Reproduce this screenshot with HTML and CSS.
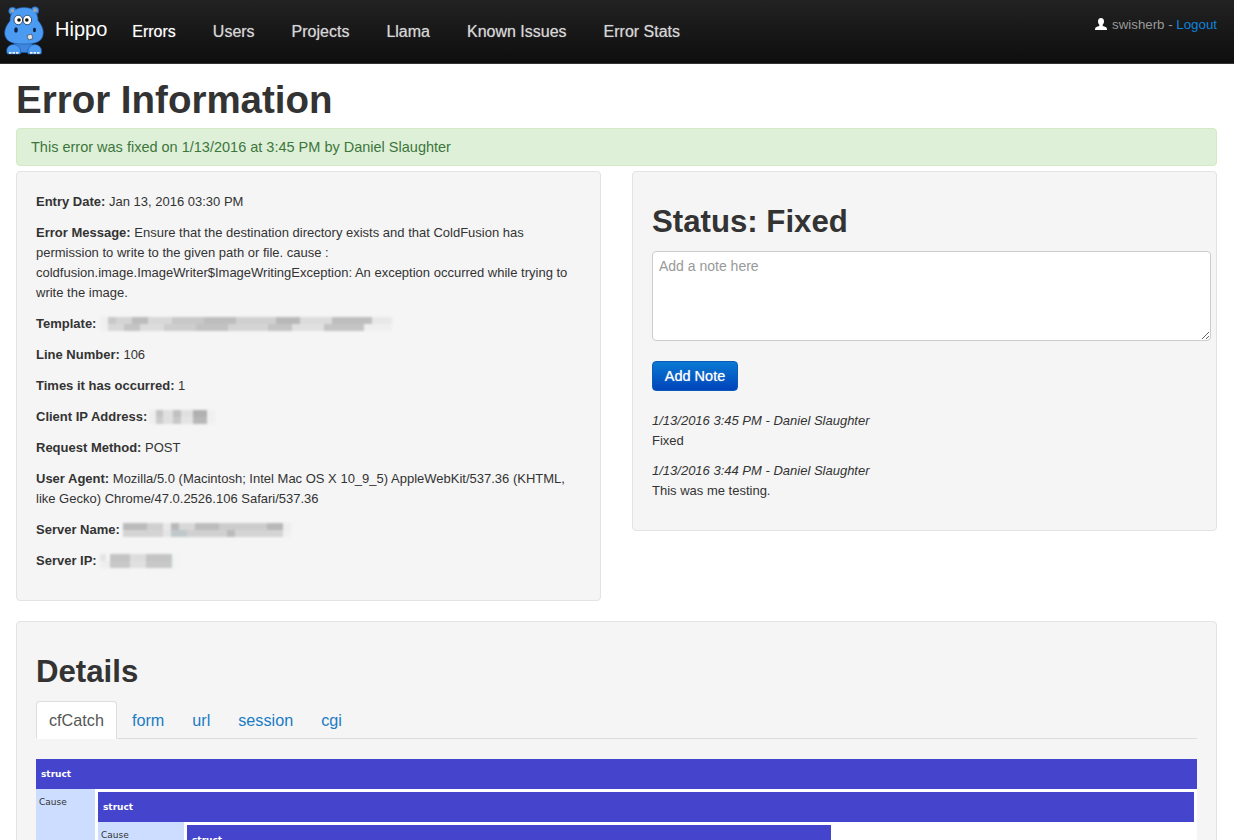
FILE: index.html
```html
<!DOCTYPE html>
<html lang="en">
<head>
    <meta charset="UTF-8">
    <meta name="viewport" content="width=device-width, initial-scale=1.0">
    <title>Hippo - Error Information</title>
    <link rel="stylesheet" href="styles.css">
</head>
<body>
    <nav class="navbar">
        <a class="brand" href="#">
            <svg class="brand-logo" width="44" height="52" viewBox="3 5 44 52">
                <g stroke="#1f5aa6" stroke-width="0.7">
                    <circle cx="12.500" cy="11" r="3.800" fill="#4c9bf2"/>
                    <circle cx="35" cy="10.500" r="3.800" fill="#4c9bf2"/>
                    <path d="M32 42H14V52.500H32Z" fill="#3f86e0"/>
                    <path d="M24 7.500C15 7.500 10 12 10 21C5.500 26 3.500 32 5.500 37C8 43 15 44 24 44C33 44 40 43 42.500 37C44.500 31 42.500 26 38 20.500C38 12 33 7.500 24 7.500Z" fill="#4c9bf2"/>
                    <ellipse cx="18.300" cy="20" rx="4.300" ry="4.700" fill="#fff" stroke="#10243f"/>
                    <ellipse cx="27.300" cy="20" rx="4.300" ry="4.700" fill="#fff" stroke="#10243f"/>
                    <path d="M7.500 54C5 49 8.500 44.500 13.500 44.500C18.500 44.500 21.500 49 20.500 54Z" fill="#4c9bf2"/>
                    <path d="M28 54C27 49 30 44.500 34.500 44.500C39.500 44.500 43 49 41 54Z" fill="#4c9bf2"/>
                    <path d="M27 35.500L31.500 34L33 38.500L28.500 40Z" fill="#e8e8e8" stroke="#333" stroke-width="0.6"/>
                </g>
                <circle cx="12.500" cy="10.800" r="1.800" fill="#a5a5a5"/>
                <circle cx="35" cy="10.300" r="1.800" fill="#a5a5a5"/>
                <circle cx="19" cy="20" r="1.800" fill="#111"/>
                <circle cx="26.800" cy="20" r="1.800" fill="#111"/>
                <ellipse cx="16" cy="30" rx="1.800" ry="2.700" fill="#0b2140"/>
                <ellipse cx="34.500" cy="30" rx="1.500" ry="2.300" fill="#0b2140"/>
                <path d="M9 52h2.500v1.800H9zM12.500 52h2.500v1.800h-2.500zM16 52h2.500v1.800H16zM30 52h2.500v1.800H30zM33.500 52H36v1.800h-2.500zM37 52h2.500v1.800H37z" fill="#eee"/>
            </svg>
            <span class="brand-name">Hippo</span>
        </a>
        <ul class="nav-links">
            <li><a class="active" href="#">Errors</a></li>
            <li><a href="#">Users</a></li>
            <li><a href="#">Projects</a></li>
            <li><a href="#">Llama</a></li>
            <li><a href="#">Known Issues</a></li>
            <li><a href="#">Error Stats</a></li>
        </ul>
        <div class="nav-user">
            <svg class="user-icon" width="12" height="12" viewBox="0 0 12 12">
                <path d="M6 0C8 0 9 1.500 9 3.500C9 5 8.300 6.300 7.500 7C7.500 8 9 8.500 10.500 9C11.500 9.400 12 10 12 12H0C0 10 .5 9.400 1.500 9C3 8.500 4.500 8 4.500 7C3.700 6.300 3 5 3 3.500C3 1.500 4 0 6 0Z" fill="#fff"/>
            </svg>
            swisherb - <a href="#">Logout</a>
        </div>
    </nav>

    <main class="page">
        <h1 class="page-title">Error Information</h1>
        <div class="alert">This error was fixed on 1/13/2016 at 3:45 PM by Daniel Slaughter</div>

        <div class="columns">
            <section class="well info-well">
                <p><b>Entry Date:</b> Jan 13, 2016 03:30 PM</p>
                <p><b>Error Message:</b> Ensure that the destination directory exists and that ColdFusion has permission to write to the given path or file. cause : coldfusion.image.ImageWriter$ImageWritingException: An exception occurred while trying to write the image.</p>
                <p><b>Template:</b> <span class="smudge smudge-template"></span></p>
                <p><b>Line Number:</b> 106</p>
                <p><b>Times it has occurred:</b> 1</p>
                <p><b>Client IP Address:</b> <span class="smudge smudge-client"></span></p>
                <p><b>Request Method:</b> POST</p>
                <p><b>User Agent:</b> Mozilla/5.0 (Macintosh; Intel Mac OS X 10_9_5) AppleWebKit/537.36 (KHTML, like Gecko) Chrome/47.0.2526.106 Safari/537.36</p>
                <p><b>Server Name:</b> <span class="smudge smudge-server"></span></p>
                <p><b>Server IP:</b> <span class="smudge smudge-ip"></span></p>
            </section>

            <section class="well status-well">
                <h2 class="well-title">Status: Fixed</h2>
                <textarea class="note-input" placeholder="Add a note here"></textarea>
                <button class="btn-note" type="button">Add Note</button>
                <div class="note">
                    <em>1/13/2016 3:45 PM - Daniel Slaughter</em>
                    <div>Fixed</div>
                </div>
                <div class="note">
                    <em>1/13/2016 3:44 PM - Daniel Slaughter</em>
                    <div>This was me testing.</div>
                </div>
            </section>
        </div>

        <section class="well details-well">
            <h2 class="well-title">Details</h2>
            <ul class="tabs">
                <li class="active"><a href="#">cfCatch</a></li>
                <li><a href="#">form</a></li>
                <li><a href="#">url</a></li>
                <li><a href="#">session</a></li>
                <li><a href="#">cgi</a></li>
            </ul>
            <table class="dump dump-1">
                <tr><th colspan="2">struct</th></tr>
                <tr>
                    <td class="key key-1">Cause</td>
                    <td class="val">
                        <table class="dump dump-2">
                            <tr><th colspan="2">struct</th></tr>
                            <tr>
                                <td class="key key-2">Cause</td>
                                <td class="val">
                                    <table class="dump dump-3">
                                        <tr><th colspan="2">struct</th></tr>
                                    </table>
                                </td>
                            </tr>
                        </table>
                    </td>
                </tr>
            </table>
        </section>
    </main>
</body>
</html>
```

FILE: styles.css
```css
body {
    margin: 0;
    background: #fff;
    color: #333;
    font-family: 'Liberation Sans', Arial, sans-serif;
    font-size: 13px;
    line-height: 20px;
}
a {
    text-decoration: none;
}

/* top bar */
.navbar {
    height: 63px;
    display: flex;
    align-items: center;
    padding: 0 17px 0 3px;
    background: linear-gradient(180deg, #222 0%, #0e0e0e 100%);
    border-bottom: 1px solid #333;
}
.brand {
    display: flex;
    align-items: center;
    color: #fff;
}
.brand-logo {
    margin-bottom: 1px;
}
.brand-name {
    margin: -6px 0 0 8px;
    font-size: 20px;
}
.nav-links {
    display: flex;
    list-style: none;
    margin: 0 0 0 6.5px;
    padding: 0;
}
.nav-links a {
    display: block;
    padding: 0 18.5px;
    color: #d6d6d6;
    font-size: 16px;
    text-shadow: 0 0 1px rgba(255,255,255,0.5);
}
.nav-links a.active {
    color: #fff;
}
.nav-user {
    margin: -13px 0 0 auto;
    color: #999;
    font-size: 13.3px;
}
.nav-user a {
    color: #0e83dd;
}
.user-icon {
    margin-right: 1px;
    vertical-align: -1px;
}

/* page */
.page {
    padding: 0 17px 0 16px;
}
.page-title {
    margin: 0;
    padding: 14px 0 7px;
    font-size: 38.5px;
    line-height: 43px;
}
.alert {
    padding: 8px 14px;
    margin-bottom: 5px;
    background: #dff0d8;
    border: 1px solid #d6e9c6;
    border-radius: 4px;
    color: #3c763d;
    font-size: 14.5px;
}
.columns {
    display: flex;
    align-items: flex-start;
    gap: 31px;
}
.well {
    box-sizing: border-box;
    padding: 19px;
    background: #f5f5f5;
    border: 1px solid #e3e3e3;
    border-radius: 4px;
}
.info-well,
.status-well {
    width: 585px;
}
.info-well {
    padding-top: 20px;
    padding-bottom: 18px;
}
.info-well p {
    margin: 0 0 11px;
}
/* blurred out values, two rows of soft blocks */
.smudge {
    display: inline-block;
    height: 14px;
    vertical-align: -3px;
    background-size: 100% 50%;
    background-position: top, bottom;
    background-repeat: no-repeat;
    filter: blur(1px);
}
.smudge-template {
    width: 292px;
    background-image:
        linear-gradient(90deg, #efefef 0 8px, #c8c8c8 8px 16px, #d4d4d4 16px 32px, #bcbcbc 32px 48px, #d8d8d8 48px 72px, #c8c8c8 72px 104px, #bdbdbd 104px 136px, #d0d0d0 136px 176px, #b8b8b8 176px 200px, #dcdcdc 200px 232px, #bebebe 232px 272px, #e8e8e8 272px 292px),
        linear-gradient(90deg, #f0f0f0 0 8px, #d8d8d8 8px 24px, #c4c4c4 24px 40px, #dcdcdc 40px 64px, #cdcdcd 64px 96px, #c2c2c2 96px 128px, #d4d4d4 128px 168px, #c4c4c4 168px 192px, #e0e0e0 192px 224px, #c4c4c4 224px 264px, #efefef 264px 292px);
}
.smudge-client {
    width: 66px;
    margin-left: -2px;
    background-image:
        linear-gradient(90deg, #eee 0 7px, #c4c4c4 7px 14px, #e0e0e0 14px 24px, #c0c0c0 24px 32px, #e0e0e0 32px 44px, #b0b0b0 44px 58px, #f0f0f0 58px 66px),
        linear-gradient(90deg, #eee 0 7px, #ccc 7px 14px, #e0e0e0 14px 24px, #c8c8c8 24px 32px, #e4e4e4 32px 44px, #b8b8b8 44px 58px, #f0f0f0 58px 66px);
}
.smudge-server {
    width: 168px;
    background-image:
        linear-gradient(90deg, #bbb 0 24px, #d0d0d0 24px 40px, #e8e8e8 40px 48px, #b8b8b8 48px 56px, #d8d8d8 56px 72px, #bcbcbc 72px 96px, #ccc 96px 144px, #b8b8b8 144px 160px, #eee 160px 168px),
        linear-gradient(90deg, #d4d4d4 0 40px, #e4e4e4 40px 48px, #c0c8cc 48px 64px, #d0d0d0 64px 104px, #bbb 104px 112px, #d4d4d4 112px 160px, #f0f0f0 160px 168px);
}
.smudge-ip {
    width: 78px;
    background-image:
        linear-gradient(90deg, #e4e4e4 0 6px, #f4f4f4 6px 10px, #c4c4c4 10px 30px, #ddd 30px 46px, #c4c4c4 46px 72px, #f0f4f4 72px 78px),
        linear-gradient(90deg, #eee 0 10px, #c8c8c8 10px 30px, #e0e0e0 30px 46px, #c8c8c8 46px 72px, #f0f4f4 72px 78px);
}

/* status column */
.status-well {
    padding-bottom: 19px;
}
.well-title {
    margin: 0;
    padding-top: 12px;
    font-size: 31.2px;
    line-height: 38px;
}
.note-input {
    display: block;
    box-sizing: border-box;
    width: 559px;
    height: 90px;
    margin: 10px 0 20px;
    padding: 4px 6px;
    border: 1px solid #ccc;
    border-radius: 4px;
    font: 14px/20px 'Liberation Sans', Arial, sans-serif;
    color: #555;
}
.note-input::placeholder {
    color: #999;
}
.btn-note {
    display: block;
    width: 86px;
    height: 30px;
    margin-bottom: 20px;
    padding: 0;
    background: linear-gradient(180deg, #0a79d2 0%, #0044bb 100%);
    border: 1px solid #0a5cb8;
    border-radius: 4px;
    color: #fff;
    font: 14.5px 'Liberation Sans', Arial, sans-serif;
    text-shadow: 0 0 1px rgba(255,255,255,0.7);
}
.note {
    margin-bottom: 10px;
}

/* details */
.details-well {
    margin-top: 20px;
    padding-bottom: 40px;
}
.tabs {
    display: flex;
    list-style: none;
    height: 37px;
    margin: 10px 0 20px;
    padding: 0;
    border-bottom: 1px solid #ddd;
    font-size: 16.2px;
}
.tabs li {
    height: 38px;
    margin-right: 2px;
}
.tabs a {
    display: block;
    box-sizing: border-box;
    height: 38px;
    padding: 0 12px;
    line-height: 36px;
    border: 1px solid transparent;
    border-radius: 4px 4px 0 0;
    color: #1a7cc4;
}
.tabs .active a {
    background: #fff;
    border-color: #ddd #ddd #fff;
    color: #555;
}

/* cfdump style tables */
.dump {
    border-collapse: collapse;
    background: #fff;
    font-family: 'DejaVu Sans', Verdana, sans-serif;
    font-size: 9px;
    line-height: 11px;
}
.dump-1 {
    width: 100%;
}
.dump-2 {
    width: 100%;
}
.dump-3 {
    width: 644px;
}
.dump th {
    height: 30px;
    padding: 0 5px;
    background: #4444cc;
    color: #fff;
    font-weight: bold;
    text-align: left;
}
.dump .key {
    padding: 8px 3px 3px;
    background: #cdf;
    vertical-align: top;
}
.key-1 {
    width: 53px;
}
.key-2 {
    width: 80px;
}
.dump .val {
    padding: 3px;
    vertical-align: top;
}
```
